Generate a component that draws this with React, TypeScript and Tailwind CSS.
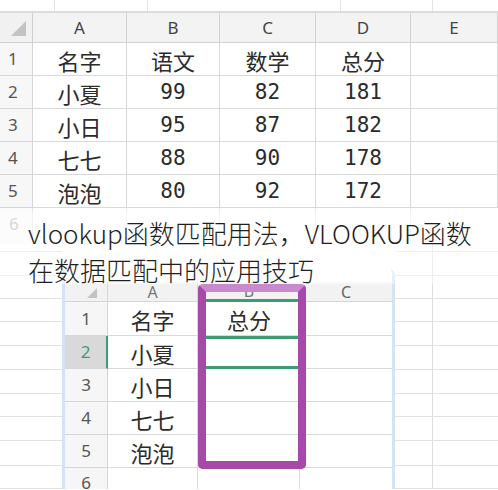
import React from "react";

const cjk = "font-['Noto_Sans_CJK_SC',sans-serif]";
const mono = "font-['DejaVu_Sans_Mono','Noto_Sans_CJK_SC',monospace]";
const latin = "font-['Noto_Sans','Liberation_Sans',sans-serif]";

const topRows = [
  ["1", "名字", "语文", "数学", "总分", ""],
  ["2", "小夏", "99", "82", "181", ""],
  ["3", "小日", "95", "87", "182", ""],
  ["4", "七七", "88", "90", "178", ""],
  ["5", "泡泡", "80", "92", "172", ""],
];

const insetRows = [
  { n: "1", name: "名字", b: "总分", h: "h-[34px]" },
  { n: "2", name: "小夏", b: "", h: "h-[33px]" },
  { n: "3", name: "小日", b: "", h: "h-[33px]" },
  { n: "4", name: "七七", b: "", h: "h-[33px]" },
  { n: "5", name: "泡泡", b: "", h: "h-[33px]" },
];

// background grid rows behind the lower picture
const bgRows = ["h-[8px]", "h-[24px]", "h-[23px]", "h-[23px]", "h-[24px]", "h-[24px]", "h-[24px]", "h-[23px]", "h-[24px]", "h-[25px]", "h-[23px]"];

function Corner({ size }: { size: number }) {
  return (
    <svg width={size} height={size} viewBox="0 0 10 10">
      <polygon points="10,0 10,10 0,10" fill="#c3c3c3" />
    </svg>
  );
}

function RowLines() {
  return (
    <div className="flex flex-col">
      {bgRows.map((h, i) => (
        <div key={i} className={`${h} border-b border-[#e2e2e2]`} />
      ))}
    </div>
  );
}

function TopSheet() {
  return (
    <div className="flex flex-col">
      {/* strip of the row above */}
      <div className="flex h-[13px] border-b-2 border-[#dcdcdc]">
        <div className="w-[55px] border-r border-[#e4e4e4]" />
        <div className="w-[93px] border-r border-[#e4e4e4]" />
        <div className="w-[193px] border-r border-[#e4e4e4]" />
        <div className="w-[92px] border-r border-[#e4e4e4]" />
        <div className="flex-1" />
      </div>

      <div className="grid grid-cols-[33px_94px_93px_96px_95px_87px]">
        <div className="h-[30px] bg-[#f1f1f1] border-r border-b border-[#cfcfcf] flex items-end justify-end pr-[6px] pb-[6px]">
          <Corner size={15} />
        </div>
        {["A", "B", "C", "D", "E"].map((c) => (
          <div
            key={c}
            className={`h-[30px] bg-[#f3f3f3] border-r border-b border-[#d2d2d2] flex items-center justify-center text-[17px] text-[#444] ${latin}`}
          >
            {c}
          </div>
        ))}

        {topRows.map((r) =>
          r.map((v, j) => {
            if (j === 0)
              return (
                <div
                  key={r[0] + j}
                  className={`h-[33px] bg-[#f7f7f7] border-r border-b border-[#d6d6d6] flex items-center pl-[8px] text-[17px] text-[#555] ${latin}`}
                >
                  {v}
                </div>
              );
            const isNum = /^\d+$/.test(v);
            return (
              <div
                key={r[0] + j}
                className={`h-[33px] border-r border-b border-[#d9d9d9] flex items-center justify-center pt-[2px] text-[#2b2b2b] ${
                  isNum ? `${mono} text-[21px]` : `${cjk} text-[22px]`
                }`}
              >
                {v}
              </div>
            );
          })
        )}

        <div className={`h-[36px] bg-[#fafafa] border-r border-[#e6e6e6] pl-[9px] pt-[3px] text-[17px] text-[#b5b5b5] ${latin}`}>6</div>
        <div className="h-[36px] border-r border-[#ececec]" />
        <div className="h-[36px] border-r border-[#ececec]" />
        <div className="h-[36px] border-r border-[#ececec]" />
        <div className="h-[36px] border-r border-[#ececec]" />
        <div className="h-[36px]" />
      </div>
    </div>
  );
}

function InsetSheet() {
  return (
    <div className="relative mt-[25px] w-[333px] h-[220px] bg-white border-x-[3px] border-[#d4e3f5] rounded-tr-[6px] flex flex-col pt-[13px]">
      <div className="grid grid-cols-[43px_90px_102px_92px]">
        <div className="h-[20px] bg-[#f2f2f2] border-r border-b border-[#d6d6d6] flex items-end justify-end pr-[10px] pb-[3px]">
          <Corner size={10} />
        </div>
        <div className={`h-[20px] bg-[#f2f2f2] border-r border-b border-[#d6d6d6] flex items-center justify-center text-[16px] text-[#777] ${latin}`}>A</div>
        <div className={`h-[20px] bg-[#f2f2f2] border-b-[3px] border-[#3d9d72] flex items-center justify-center text-[16px] text-[#777] ${latin}`}>B</div>
        <div className={`h-[20px] bg-[#f2f2f2] border-b border-[#d6d6d6] flex items-center justify-center text-[16px] text-[#666] ${latin}`}>C</div>

        {insetRows.map((r) => {
          const sel = r.n === "2";
          return (
            <React.Fragment key={r.n}>
              <div
                className={`${r.h} border-b border-[#d6d6d6] flex items-center justify-center text-[17px] ${latin} ${
                  sel ? "bg-[#d9d9d9] text-[#3d9d72] border-r-2 border-r-[#3d9d72]" : "bg-[#f6f6f6] text-[#555] border-r border-r-[#d6d6d6]"
                }`}
              >
                {r.n}
              </div>
              <div className={`${r.h} border-r border-b border-[#dadada] flex items-center justify-center pt-[2px] text-[22px] text-[#2b2b2b] ${cjk}`}>
                {r.name}
              </div>
              <div
                className={`${r.h} flex items-center justify-center pt-[2px] text-[22px] text-[#2b2b2b] ${cjk} ${
                  sel ? "border-y-[3px] border-[#3d9d72]" : "border-b border-[#dadada]"
                }`}
              >
                {r.b}
              </div>
              <div className={`${r.h} border-b border-[#dadada]`} />
            </React.Fragment>
          );
        })}

        <div className={`h-[21px] bg-[#f6f6f6] border-r border-[#d6d6d6] flex items-start justify-center pt-[2px] text-[17px] text-[#555] ${latin}`}>6</div>
        <div className="h-[21px] border-r border-[#dadada]" />
        <div className="h-[21px] border-r border-[#dadada]" />
        <div className="h-[21px]" />
      </div>

      {/* purple annotation box */}
      <div className="absolute left-[133px] top-[15px] w-[108px] h-[185px] rounded-[5px] border-[8px] border-[#a54aa9] border-t-[#c98acd]" />
    </div>
  );
}

export default function App() {
  return (
    <div className="relative w-[498px] h-[490px] overflow-hidden bg-white">
      <TopSheet />

      <div className="flex h-[245px]">
        <div className="w-[62px]">
          <RowLines />
        </div>
        <InsetSheet />
        <div className="flex-1 flex">
          <div className="w-[38px] border-r border-[#dedede]">
            <RowLines />
          </div>
          <div className="flex-1">
            <RowLines />
          </div>
        </div>
      </div>

      {/* soft backing behind the caption */}
      <div className="absolute left-0 top-[212px] w-full h-[72px] bg-white/45" />

      <div className={`absolute left-[28px] top-[214px] text-[26px] leading-[37px] font-light text-[#1f1f1f] ${cjk}`}>
        <p>vlookup函数匹配用法，VLOOKUP函数</p>
        <p>在数据匹配中的应用技巧</p>
      </div>
    </div>
  );
}
